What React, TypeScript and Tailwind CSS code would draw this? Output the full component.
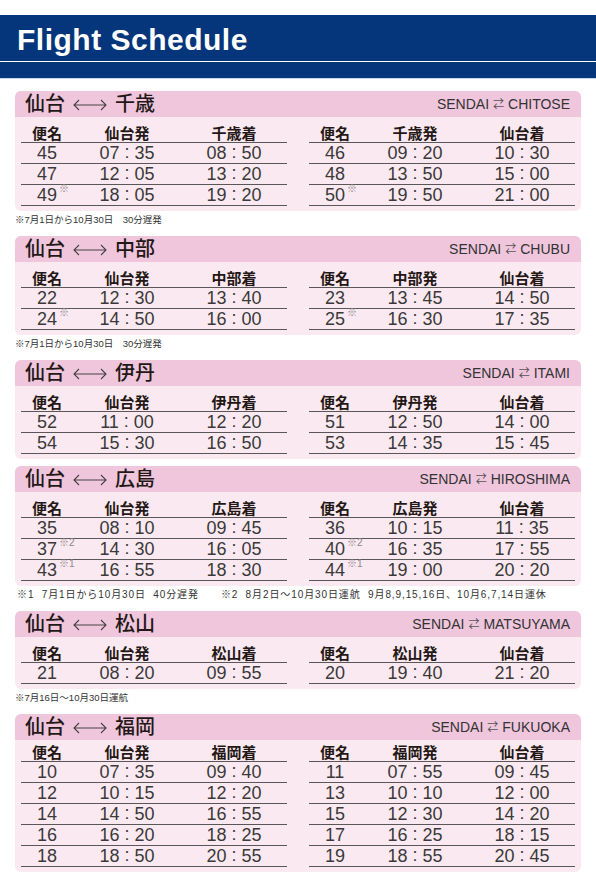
import type { ReactNode } from "react";

type Flight = { no: string; mark?: string; dep: string; arr: string };

type Route = {
  city: string;
  en: string;
  out: Flight[];
  back: Flight[];
  note?: ReactNode;
  tight?: boolean;
};

const lateNote = "※7月1日から10月30日　30分遅発";

const routes: Route[] = [
  {
    city: "千歳",
    en: "CHITOSE",
    out: [
      { no: "45", dep: "07:35", arr: "08:50" },
      { no: "47", dep: "12:05", arr: "13:20" },
      { no: "49", mark: "※", dep: "18:05", arr: "19:20" },
    ],
    back: [
      { no: "46", dep: "09:20", arr: "10:30" },
      { no: "48", dep: "13:50", arr: "15:00" },
      { no: "50", mark: "※", dep: "19:50", arr: "21:00" },
    ],
    note: lateNote,
  },
  {
    city: "中部",
    en: "CHUBU",
    out: [
      { no: "22", dep: "12:30", arr: "13:40" },
      { no: "24", mark: "※", dep: "14:50", arr: "16:00" },
    ],
    back: [
      { no: "23", dep: "13:45", arr: "14:50" },
      { no: "25", mark: "※", dep: "16:30", arr: "17:35" },
    ],
    note: lateNote,
  },
  {
    city: "伊丹",
    en: "ITAMI",
    out: [
      { no: "52", dep: "11:00", arr: "12:20" },
      { no: "54", dep: "15:30", arr: "16:50" },
    ],
    back: [
      { no: "51", dep: "12:50", arr: "14:00" },
      { no: "53", dep: "14:35", arr: "15:45" },
    ],
  },
  {
    city: "広島",
    en: "HIROSHIMA",
    out: [
      { no: "35", dep: "08:10", arr: "09:45" },
      { no: "37", mark: "※2", dep: "14:30", arr: "16:05" },
      { no: "43", mark: "※1", dep: "16:55", arr: "18:30" },
    ],
    back: [
      { no: "36", dep: "10:15", arr: "11:35" },
      { no: "40", mark: "※2", dep: "16:35", arr: "17:55" },
      { no: "44", mark: "※1", dep: "19:00", arr: "20:20" },
    ],
    note: (
      <span className="flex gap-[22px] pl-[2px] text-[10px] tracking-[0.9px]">
        <span className="whitespace-pre">※1  7月1日から10月30日  40分遅発</span>
        <span className="whitespace-pre">
          ※2  8月2日～10月30日運航  9月8,9,15,16日、10月6,7,14日運休
        </span>
      </span>
    ),
  },
  {
    city: "松山",
    en: "MATSUYAMA",
    out: [{ no: "21", dep: "08:20", arr: "09:55" }],
    back: [{ no: "20", dep: "19:40", arr: "21:20" }],
    note: "※7月16日～10月30日運航",
  },
  {
    city: "福岡",
    en: "FUKUOKA",
    tight: true,
    out: [
      { no: "10", dep: "07:35", arr: "09:40" },
      { no: "12", dep: "10:15", arr: "12:20" },
      { no: "14", dep: "14:50", arr: "16:55" },
      { no: "16", dep: "16:20", arr: "18:25" },
      { no: "18", dep: "18:50", arr: "20:55" },
    ],
    back: [
      { no: "11", dep: "07:55", arr: "09:45" },
      { no: "13", dep: "10:10", arr: "12:00" },
      { no: "15", dep: "12:30", arr: "14:20" },
      { no: "17", dep: "16:25", arr: "18:15" },
      { no: "19", dep: "18:55", arr: "20:45" },
    ],
  },
];

// time with the wide-set colon of the printed timetable
const Time = ({ value }: { value: string }) => {
  const [h, m] = value.split(":");
  return (
    <span>
      {h}
      <span className="mx-[5px] relative top-[-1px]">:</span>
      {m}
    </span>
  );
};

// One direction of a route
const Timetable = ({
  from,
  to,
  rows,
  tight,
}: {
  from: string;
  to: string;
  rows: Flight[];
  tight?: boolean;
}) => (
  <div>
    <div
      className={`grid grid-cols-[52px_108px_106px] items-end border-b border-[#595757] pb-[1px] text-center text-[15px] font-bold leading-none text-[#231815] ${
        tight ? "h-[22px]" : "h-[26px]"
      }`}>
      <span>便名</span>
      <span>{from}発</span>
      <span>{to}着</span>
    </div>
    {rows.map((f) => (
      <div
        key={f.no}
        className="grid h-[21px] grid-cols-[52px_108px_106px] items-center border-b border-[#595757] text-center text-[18px] leading-none text-[#3a3a3a]">
        <span className="relative">
          {f.no}
          {f.mark && (
            <span className="absolute top-[-2px] ml-[2px] text-[10px] text-[#888]">
              {f.mark}
            </span>
          )}
        </span>
        <Time value={f.dep} />
        <Time value={f.arr} />
      </div>
    ))}
  </div>
);

const Arrow = () => (
  <svg
    width="34"
    height="12"
    viewBox="0 0 34 12"
    className="mx-[8px] mt-[2px]"
    fill="none"
    stroke="#444"
    strokeWidth="1.1">
    <path d="M1 6H33M6 1L1 6L6 11M28 1L33 6L28 11" />
  </svg>
);

const RouteCard = ({ route }: { route: Route }) => (
  <div>
    <div className="overflow-hidden rounded-[6px] bg-[#fbe9f1]">
      <div className="flex h-[26px] items-center justify-between bg-[#f0c6dc] pl-[10px] pr-[11px]">
        <span className="flex items-center text-[20px] font-medium leading-none text-[#231815]">
          仙台
          <Arrow />
          {route.city}
        </span>
        <span className="flex items-center text-[14px] leading-none text-[#333]">
          SENDAI
          <span className="mx-[4px] text-[11px] text-[#555]">⇄</span>
          {route.en}
        </span>
      </div>
      <div className="flex justify-between px-[6px] pb-[5px]">
        <Timetable
          from="仙台"
          to={route.city}
          rows={route.out}
          tight={route.tight}
        />
        <Timetable
          from={route.city}
          to="仙台"
          rows={route.back}
          tight={route.tight}
        />
      </div>
    </div>
    {route.note ? (
      <div className="mb-[11px] mt-[4px] whitespace-pre text-[9.5px] leading-[10px] text-[#333]">
        {route.note}
      </div>
    ) : (
      <div className="h-[7px]" />
    )}
  </div>
);

export default function App() {
  return (
    <div className="min-h-[875px] bg-white font-['Liberation_Sans','Noto_Sans_CJK_JP',sans-serif]">
      <div className="pt-[15px]">
        <div className="bg-[#05357a]">
          <div className="flex h-[47px] items-center border-b border-white pl-[17px] pt-[4px]">
            <h1 className="text-[30px] font-bold leading-none tracking-[0.5px] text-white">
              Flight Schedule
            </h1>
          </div>
          <div className="h-[17px] border-b border-[#c9d6ea]" />
        </div>
      </div>
      <div className="px-[15px] pt-[12px]">
        {routes.map((r) => (
          <RouteCard key={r.en} route={r} />
        ))}
      </div>
    </div>
  );
}
